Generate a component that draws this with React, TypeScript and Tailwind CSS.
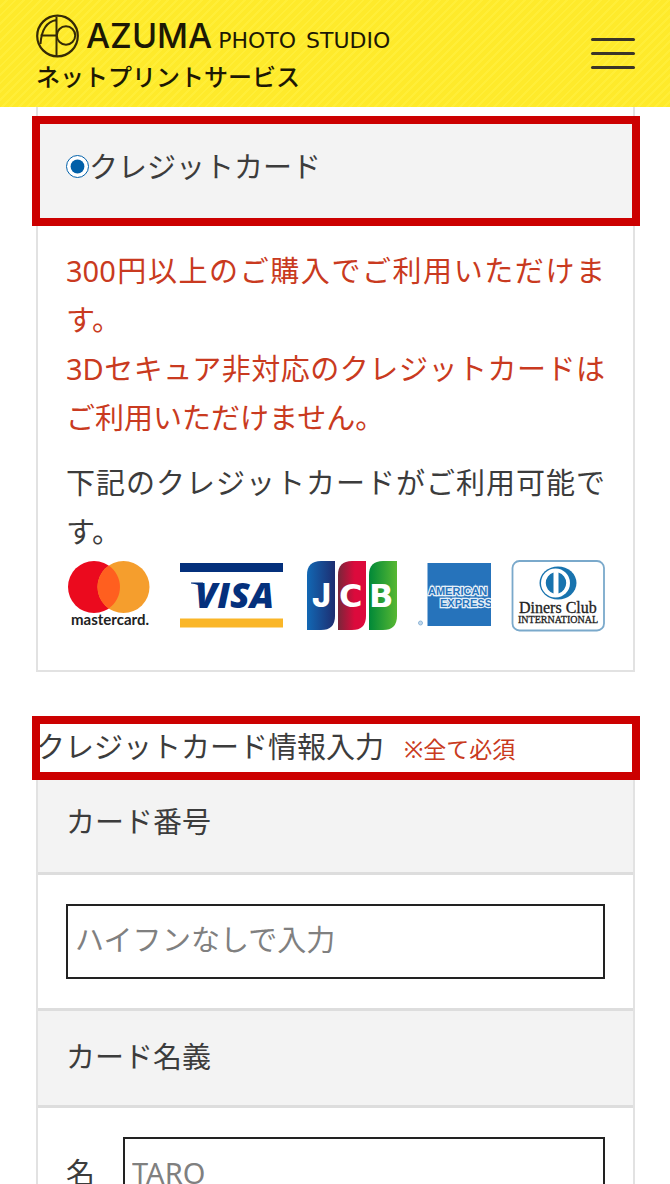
import React from "react";

function BrandMark() {
  return (
    <svg viewBox="0 0 44 44" className="size-11 shrink-0" fill="none" stroke="#352a06" aria-hidden="true">
      <circle cx="21.500" cy="22" r="20.300" strokeWidth="2.2" />
      <path d="M20.500 3V42M20.500 6C11 7.500 5.500 15 4.500 30M4.500 21.500H20.500" strokeWidth="2" />
      <circle cx="30" cy="21.500" r="9.200" strokeWidth="2" />
    </svg>
  );
}

function Mastercard() {
  return (
    <svg viewBox="0 0 94 72" className="h-[72px] w-[94px]" role="img" aria-label="mastercard">
      <circle cx="28" cy="27" r="26" fill="#eb0a1e" />
      <circle cx="57.500" cy="27" r="26" fill="#f59e2d" />
      <path d="M42.750 5.600a26 26 0 0 1 0 42.800a26 26 0 0 1 0-42.800z" fill="#ff5f1f" />
      <text x="5" y="65" fontFamily="Lato, sans-serif" fontSize="15" fontWeight="700" fill="#222">mastercard.</text>
    </svg>
  );
}

function Visa() {
  return (
    <svg viewBox="0 0 107 72" className="h-[72px] w-[107px]" role="img" aria-label="VISA">
      <path d="M0 3h103v9H0z" fill="#04307c" />
      <path d="M0 58.500h103v9H0z" fill="#fab628" />
      <path d="M11 22.500h12l1 5c-4-2-8-3.500-13-4z" fill="#04307c" />
      <text x="15" y="48" fontFamily="Open Sans, sans-serif" fontSize="36" fontWeight="800" fontStyle="italic" fill="#04307c">VISA</text>
    </svg>
  );
}

function Jcb() {
  return (
    <svg viewBox="0 0 90 72" className="h-[72px] w-[90px]" role="img" aria-label="JCB">
      <defs>
        <linearGradient id="jcb-blue"><stop offset="0" stopColor="#1268b4" /><stop offset="1" stopColor="#1d2d70" /></linearGradient>
        <linearGradient id="jcb-red"><stop offset="0" stopColor="#78263a" /><stop offset=".6" stopColor="#dc0a3c" /><stop offset="1" stopColor="#dc0a3c" /></linearGradient>
        <linearGradient id="jcb-green"><stop offset="0" stopColor="#008838" /><stop offset="1" stopColor="#58b832" /></linearGradient>
      </defs>
      <path d="M14 1h14v55q0 14-14 14H0V15Q0 1 14 1z" fill="url(#jcb-blue)" />
      <path d="M45 1h14v55q0 14-14 14H31V15Q31 1 45 1z" fill="url(#jcb-red)" />
      <path d="M76 1h14v55q0 14-14 14H62V15Q62 1 76 1z" fill="url(#jcb-green)" />
      <text x="5" y="47" fontFamily="Inter, sans-serif" fontSize="32" fontWeight="800" fill="#fff">J</text>
      <text x="32" y="47" fontFamily="DejaVu Sans, sans-serif" fontSize="32" fontWeight="700" fill="#fff">C</text>
      <text x="62" y="47" fontFamily="DejaVu Sans, sans-serif" fontSize="32" fontWeight="700" fill="#fff">B</text>
    </svg>
  );
}

function Amex() {
  return (
    <svg viewBox="0 0 74 72" className="h-[72px] w-[74px]" role="img" aria-label="AMERICAN EXPRESS">
      <path d="M10.500 3H74v63H10.500z" fill="#2673bb" />
      <g fontFamily="Liberation Sans, sans-serif" fontSize="11" fontWeight="700" fill="#2673bb" stroke="#e6f0f8" strokeWidth="2.4" paintOrder="stroke">
        <text x="11" y="35">AMERICAN</text>
        <text x="23" y="47">EXPRESS</text>
      </g>
      <circle cx="3.500" cy="63" r="2" fill="#c4d9eb" stroke="#8fb6d8" />
    </svg>
  );
}

function Diners() {
  return (
    <svg viewBox="0 0 94 72" className="h-[72px] w-[94px]" role="img" aria-label="Diners Club INTERNATIONAL">
      <rect x="1.500" y="1" width="91.500" height="69.500" rx="7" fill="#fff" stroke="#7aa9cb" strokeWidth="1.800" />
      <ellipse cx="47" cy="23" rx="18.500" ry="16.500" fill="#1873ae" />
      <circle cx="44.500" cy="23" r="14.500" fill="#fff" />
      <path d="M42.500 12.500a11 11 0 0 0 0 21zM47.500 12.500a11 11 0 0 1 0 21z" fill="#1873ae" />
      <text x="8" y="53" fontFamily="Liberation Serif, serif" fontSize="16" fill="#222" stroke="#222" strokeWidth=".3">Diners Club</text>
      <text x="7" y="63" fontFamily="Liberation Serif, serif" fontSize="10" fill="#222" stroke="#222" strokeWidth=".3">INTERNATIONAL</text>
    </svg>
  );
}

function Highlight({ className }: { className: string }) {
  return <span aria-hidden="true" className={`pointer-events-none absolute border-8 border-[#cc0000] ${className}`} />;
}

const field =
  "h-[75px] w-full min-w-0 border-2 border-[#222] bg-white pl-[7px] pb-1 text-[29px] text-[#333] placeholder:text-[#808080] outline-none";

export default function App() {
  return (
    <div className="flex h-screen flex-col bg-white font-['Noto_Sans','Noto_Sans_CJK_JP',sans-serif] text-[29px] leading-[49px] text-[#3c3c3c]">
      <header className="flex h-[107px] shrink-0 items-center justify-between bg-[repeating-linear-gradient(135deg,#feea2b_0_4px,#ffee38_4px_6px)] pr-[35px] pl-9">
        <a href="#top" className="flex flex-col text-[#1c1804]">
          <span className="flex items-center gap-1.5">
            <BrandMark />
            <span className="flex items-baseline gap-1.5 leading-none">
              <span className="font-['Inter',sans-serif] text-[34px] font-medium">AZUMA</span>
              <span className="flex gap-2.5 font-['DejaVu_Sans',sans-serif] text-[22px]">
                <span>PHOTO</span>
                <span>STUDIO</span>
              </span>
            </span>
          </span>
          <span className="font-['Noto_Sans_CJK_JP',sans-serif] text-[24px] leading-9 font-medium">ネットプリントサービス</span>
        </a>
        <button type="button" aria-label="メニュー" className="flex w-11 flex-col gap-[11px]">
          <span className="h-[3px] rounded-sm bg-[#3a3528]" />
          <span className="h-[3px] rounded-sm bg-[#3a3528]" />
          <span className="h-[3px] rounded-sm bg-[#3a3528]" />
        </button>
      </header>

      <main className="min-h-0 flex-1 overflow-y-auto pr-[35px] pl-9 [scrollbar-width:none]">
        <section className="border-x-2 border-b-2 border-[#e2e2e2] pt-[11px]">
          <div className="relative flex h-[102px] items-center border-b-2 border-[#ddd] bg-[#f3f3f3] px-7 pb-1">
            <label className="flex items-center">
              <input type="radio" name="payment" defaultChecked className="size-[23px] accent-[#005fa8]" />
              クレジットカード
            </label>
            <Highlight className="-top-[2px] -right-[7px] -bottom-[8px] -left-[6px]" />
          </div>
          <div className="px-7 pt-[26px] pb-[38px] text-justify">
            <p className="text-[#c93a20]">
              300円以上のご購入でご利用いただけます。
              <br />
              3Dセキュア非対応のクレジットカードはご利用いただけません。
            </p>
            <p className="mt-4">下記のクレジットカードがご利用可能です。</p>
            <div className="flex justify-between pt-1">
              <Mastercard />
              <Visa />
              <Jcb />
              <Amex />
              <Diners />
            </div>
          </div>
        </section>

        <form className="pt-11">
          <h2 className="relative flex h-[59px] items-baseline pt-[6px]">
            クレジットカード情報入力
            <span className="ml-5 text-[23px] text-[#c93a20]">※全て必須</span>
            <Highlight className="top-0 -right-[5px] -bottom-[5px] -left-1" />
          </h2>
          <div className="border-x-2 border-[#e2e2e2]">
            <div className="flex h-[100px] items-center border-b-3 border-[#ddd] bg-[#f3f3f3] px-7 pb-1">
              <label htmlFor="card-number">カード番号</label>
            </div>
            <div className="border-b-3 border-[#ddd] px-7 py-[29px] leading-none">
              <input id="card-number" type="text" placeholder="ハイフンなしで入力" className={field} />
            </div>
            <div className="flex h-[97px] items-center border-b-3 border-[#ddd] bg-[#f3f3f3] px-7 pb-1">カード名義</div>
            <div className="flex items-center gap-7 px-7 py-[29px]">
              <label htmlFor="first-name" className="shrink-0 pb-1">名</label>
              <input id="first-name" type="text" placeholder="TARO" className={field} />
            </div>
          </div>
        </form>
      </main>
    </div>
  );
}
